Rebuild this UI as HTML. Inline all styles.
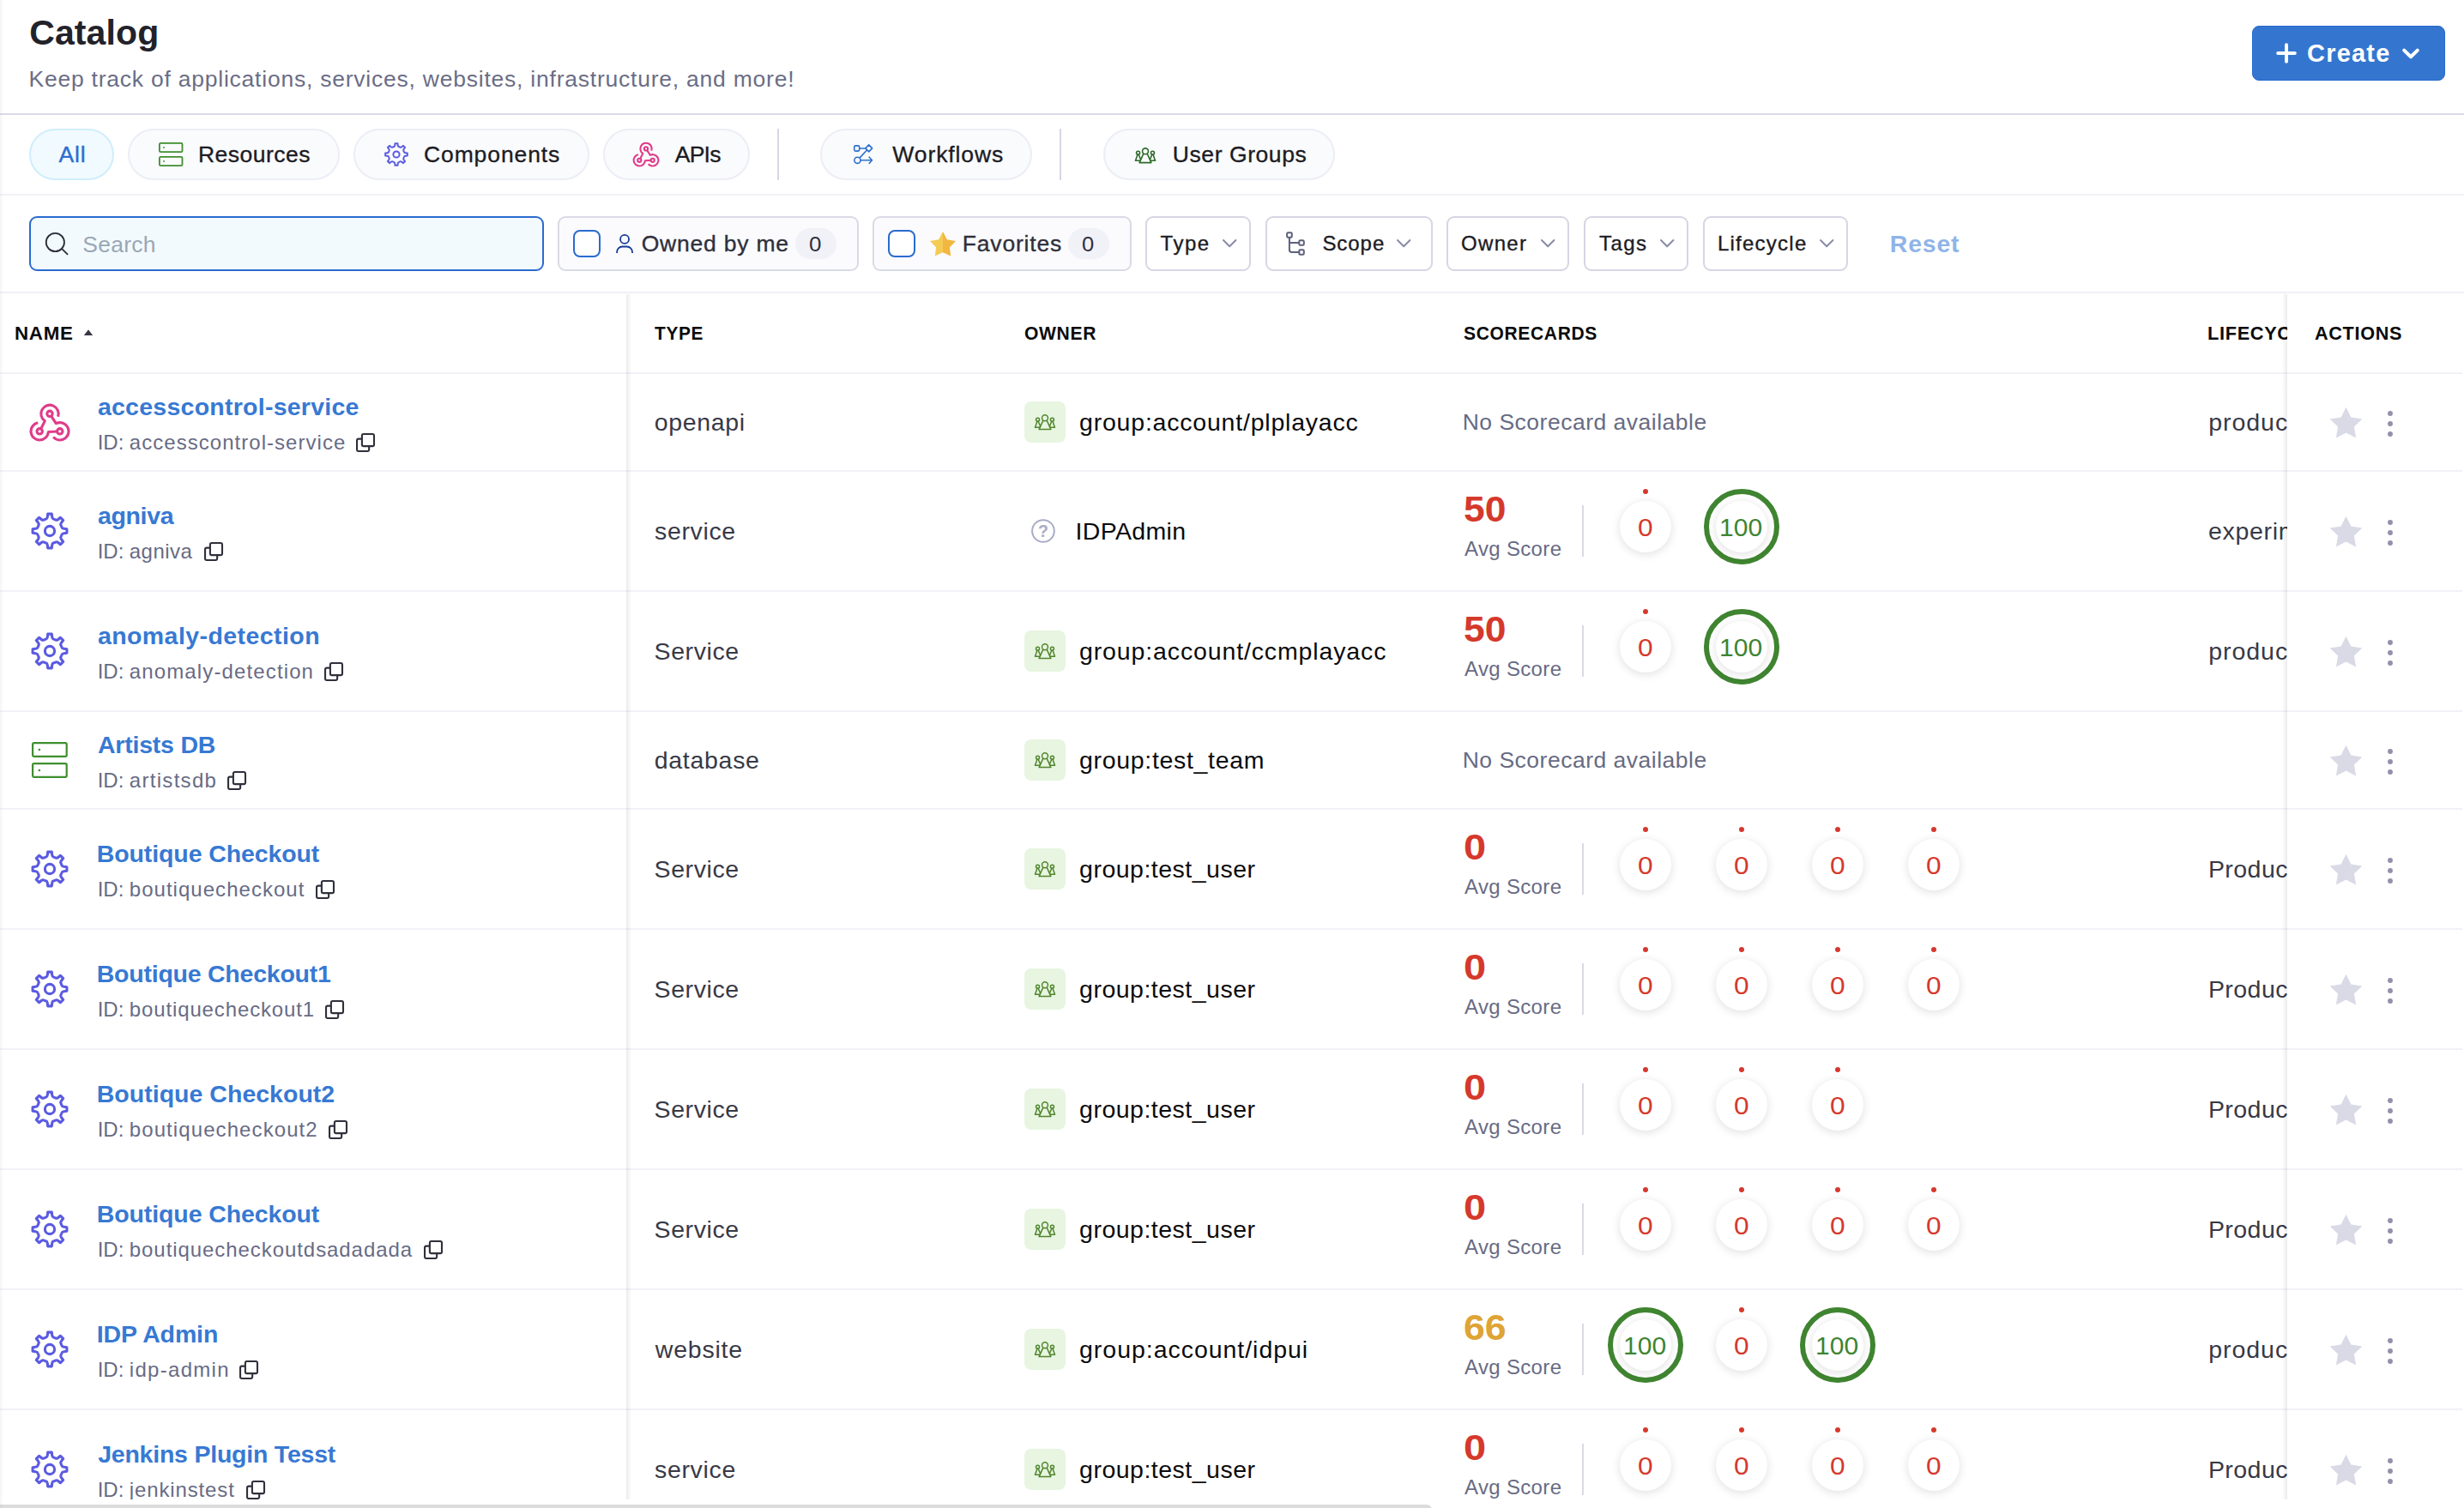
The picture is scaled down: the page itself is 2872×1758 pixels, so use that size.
<!DOCTYPE html>
<html lang="en"><head><meta charset="utf-8"><title>Catalog</title><style>
html,body{margin:0;padding:0;background:#fff;}
body{width:2872px;height:1758px;overflow:hidden;position:relative;font-family:"Liberation Sans",sans-serif;-webkit-font-smoothing:antialiased;}
.t{position:absolute;white-space:nowrap;}
.m{-webkit-text-stroke:0.35px currentColor;}
.sb{-webkit-text-stroke:0.85px currentColor;}
svg{overflow:visible}
</style></head><body>
<header>
<span class="t h1" style="left:34.16px;top:18px;font-size:41px;line-height:41px;color:#22222a;font-weight:700;letter-spacing:0.113px;">Catalog</span>
<span class="t" style="left:33.48px;top:79px;font-size:26.5px;line-height:26.5px;color:#6b6d85;letter-spacing:0.770px;">Keep track of applications, services, websites, infrastructure, and more!</span>
<div class="btn" style="position:absolute;left:2625px;top:30px;width:225px;height:64px;background:#3476cf;border:1px solid #2469cd;box-sizing:border-box;border-radius:8px;"></div>
<svg style="position:absolute;left:2651px;top:48px;" width="28" height="28" viewBox="0 0 28 28" fill="none"><path d="M14,4.2V23.8M4.2,14H23.8" stroke="#fff" stroke-width="4" stroke-linecap="round"/></svg>
<span class="t" style="left:2689.04px;top:48px;font-size:29px;line-height:29px;color:#fff;font-weight:700;letter-spacing:1.197px;">Create</span>
<svg style="position:absolute;left:2796px;top:52px;" width="28" height="20" viewBox="0 0 28 20" fill="none"><path d="M6.2,6.6L14,14.2L21.8,6.6" stroke="#fff" stroke-width="4" stroke-linecap="round" stroke-linejoin="round"/></svg>
<div style="position:absolute;left:0px;top:132px;width:2872px;height:2px;background:#d9dae6;"></div>
</header>
<nav>
<div class="pill on" style="position:absolute;left:34px;top:150px;width:99px;height:60px;border:2px solid #cfeefb;background:#f1fafe;border-radius:30px;box-sizing:border-box;"></div>
<span class="t" style="left:68.60px;top:167px;font-size:26.5px;line-height:26.5px;color:#2c6ed0;letter-spacing:0.797px;-webkit-text-stroke:0.4px #2c6ed0;">All</span>
<div class="pill" style="position:absolute;left:149px;top:150px;width:246.7px;height:60px;border:2px solid #ededf6;background:#fafbfd;border-radius:30px;box-sizing:border-box;"></div>
<svg style="position:absolute;left:183.8px;top:165px;" width="30.4" height="30" viewBox="0 0 30.4 30" fill="none"><rect x="1.9" y="1.9" width="26.599999999999998" height="10.24" rx="1.4" stroke="#3e8e2e" stroke-width="1.8"/><rect x="1.9" y="17.86" width="26.599999999999998" height="10.24" rx="1.4" stroke="#3e8e2e" stroke-width="1.8"/><circle cx="7.02" cy="7.02" r="0.9" fill="#3e8e2e"/><circle cx="7.02" cy="22.98" r="0.9" fill="#3e8e2e"/></svg>
<span class="t m" style="left:230.88px;top:167px;font-size:26.5px;line-height:26.5px;color:#1c1c24;letter-spacing:0.484px;">Resources</span>
<div class="pill" style="position:absolute;left:412.3px;top:150px;width:274.3px;height:60px;border:2px solid #ededf6;background:#fafbfd;border-radius:30px;box-sizing:border-box;"></div>
<svg style="position:absolute;left:445.2px;top:162.9px;" width="34" height="34" viewBox="0 0 34 34" fill="none"><path d="M14.02,8.07Q15.13,7.77 15.28,6.36L15.52,4.16L18.48,4.16L18.72,6.36Q18.87,7.77 19.98,8.07A9.42,9.42 0 0 1 21.21,8.58Q22.20,9.15 23.31,8.26L25.03,6.87L27.13,8.97L25.74,10.69Q24.85,11.80 25.42,12.79A9.42,9.42 0 0 1 25.93,14.02Q26.23,15.13 27.64,15.28L29.84,15.52L29.84,18.48L27.64,18.72Q26.23,18.87 25.93,19.98A9.42,9.42 0 0 1 25.42,21.21Q24.85,22.20 25.74,23.31L27.13,25.03L25.03,27.13L23.31,25.74Q22.20,24.85 21.21,25.42A9.42,9.42 0 0 1 19.98,25.93Q18.87,26.23 18.72,27.64L18.48,29.84L15.52,29.84L15.28,27.64Q15.13,26.23 14.02,25.93A9.42,9.42 0 0 1 12.79,25.42Q11.80,24.85 10.69,25.74L8.97,27.13L6.87,25.03L8.26,23.31Q9.15,22.20 8.58,21.21A9.42,9.42 0 0 1 8.07,19.98Q7.77,18.87 6.36,18.72L4.16,18.48L4.16,15.52L6.36,15.28Q7.77,15.13 8.07,14.02A9.42,9.42 0 0 1 8.58,12.79Q9.15,11.80 8.26,10.69L6.87,8.97L8.97,6.87L10.69,8.26Q11.80,9.15 12.79,8.58A9.42,9.42 0 0 1 14.02,8.07Z" stroke="#5b5be2" stroke-width="2.0" stroke-linejoin="round"/><circle cx="17.0" cy="17.0" r="3.61" stroke="#5b5be2" stroke-width="2.0"/></svg>
<span class="t m" style="left:493.98px;top:167px;font-size:26.5px;line-height:26.5px;color:#1c1c24;letter-spacing:0.899px;">Components</span>
<div class="pill" style="position:absolute;left:703.2px;top:150px;width:170.4px;height:60px;border:2px solid #ededf6;background:#fafbfd;border-radius:30px;box-sizing:border-box;"></div>
<svg style="position:absolute;left:733.7px;top:164.25px;" width="38" height="38" viewBox="0 0 38 38" fill="none"><path d="M25.32,11.60A6.68,6.68 0 1 0 15.26,14.96L12.22,20.94" stroke="#df3c8a" stroke-width="2.1" stroke-linejoin="round"/><circle cx="19.00" cy="9.42" r="2.10" stroke="#df3c8a" stroke-width="2.1"/><path d="M10.00,16.25A6.68,6.68 0 1 0 17.94,23.27L24.64,22.92" stroke="#df3c8a" stroke-width="2.1" stroke-linejoin="round"/><circle cx="11.27" cy="22.81" r="2.10" stroke="#df3c8a" stroke-width="2.1"/><path d="M21.69,27.19A6.68,6.68 0 1 0 23.80,16.80L20.14,11.18" stroke="#df3c8a" stroke-width="2.1" stroke-linejoin="round"/><circle cx="26.73" cy="22.81" r="2.10" stroke="#df3c8a" stroke-width="2.1"/></svg>
<span class="t m" style="left:786.80px;top:167px;font-size:26.5px;line-height:26.5px;color:#1c1c24;letter-spacing:-0.780px;">APIs</span>
<div style="position:absolute;left:906px;top:150px;width:2px;height:60px;background:#d6d7e4;"></div>
<div class="pill" style="position:absolute;left:956.4px;top:150px;width:246.6px;height:60px;border:2px solid #ededf6;background:#fafbfd;border-radius:30px;box-sizing:border-box;"></div>
<svg style="position:absolute;left:994px;top:167px;" width="26" height="28" viewBox="0 0 26 28" fill="none"><g stroke="#2e6fd0" stroke-width="1.6" stroke-linejoin="round" stroke-linecap="round"><rect x="1.70" y="2.90" width="6" height="6.2" rx="1.6"/><path d="M18.70,1.90L22.60,5.90L18.70,9.90L14.80,5.90Z"/><path d="M7.70,6.00L14.80,6.00"/><path d="M16.20,8.20L8.20,16.90"/><circle cx="5.40" cy="19.80" r="3.6"/><path d="M9.00,19.70L22.20,19.70M19.20,16.20L22.40,19.70L19.20,23.40"/></g></svg>
<span class="t m" style="left:1040.30px;top:167px;font-size:26.5px;line-height:26.5px;color:#1c1c24;letter-spacing:0.912px;">Workflows</span>
<div style="position:absolute;left:1235px;top:150px;width:2px;height:60px;background:#d6d7e4;"></div>
<div class="pill" style="position:absolute;left:1285.5px;top:150px;width:270.9px;height:60px;border:2px solid #ededf6;background:#fafbfd;border-radius:30px;box-sizing:border-box;"></div>
<svg style="position:absolute;left:1319.0px;top:167.7px;" width="32" height="26" viewBox="0 0 32 26" fill="none"><g stroke="#2d6a2a" stroke-width="1.6" stroke-linejoin="round" stroke-linecap="round"><circle cx="16.00" cy="8.30" r="3.45"/><path d="M13.70,11.40L9.10,21.60L22.90,21.60L18.30,11.40"/><circle cx="7.55" cy="10.30" r="2.00"/><path d="M6.95,12.30L4.50,19.20L10.00,19.20"/><path d="M8.15,12.30L10.50,17.60"/><circle cx="24.45" cy="10.30" r="2.00"/><path d="M25.05,12.30L27.50,19.20L22.00,19.20"/><path d="M23.85,12.30L21.50,17.60"/></g></svg>
<span class="t m" style="left:1366.81px;top:167px;font-size:26.5px;line-height:26.5px;color:#1c1c24;letter-spacing:0.570px;">User Groups</span>
<div style="position:absolute;left:0px;top:226px;width:2872px;height:2px;background:#f1f1f8;"></div>
</nav>
<section class="filters">
<div class="search" style="position:absolute;left:34px;top:252px;width:600px;height:64px;border:2px solid #2a6bcf;background:#f2fafe;border-radius:9px;box-sizing:border-box;"></div>
<svg style="position:absolute;left:50px;top:268px;" width="32" height="32" viewBox="0 0 32 32" fill="none"><circle cx="14.35" cy="14.5" r="10.6" stroke="#2b2c38" stroke-width="1.8"/><path d="M22.2,22.2L28.6,28.4" stroke="#2b2c38" stroke-width="1.8" stroke-linecap="round"/></svg>
<span class="t" style="left:96.31px;top:272px;font-size:26.5px;line-height:26.5px;color:#9aa7b4;letter-spacing:0.269px;">Search</span>
<div class="fbox" style="position:absolute;left:650px;top:252px;width:350.5px;height:64px;border:2px solid #d9dae6;background:#fbfbfe;border-radius:9px;box-sizing:border-box;"></div>
<div class="cb" style="position:absolute;left:668px;top:268px;width:32px;height:32px;border:2px solid #2a6bcf;background:#fff;border-radius:8px;box-sizing:border-box;"></div>
<svg style="position:absolute;left:714px;top:270px;" width="28" height="28" viewBox="0 0 28 28" fill="none"><circle cx="14.05" cy="8.9" r="5" stroke="#143c96" stroke-width="1.8"/><path d="M5.1,24.9v-1.2a6.2,6.2 0 0 1 6.2,-6.2h5.5a6.2,6.2 0 0 1 6.2,6.2v1.2" stroke="#143c96" stroke-width="1.8"/></svg>
<span class="t m" style="left:747.71px;top:271px;font-size:26.5px;line-height:26.5px;color:#2f303b;letter-spacing:0.778px;">Owned by me</span>
<div style="position:absolute;left:927.2px;top:266px;width:47.6px;height:36px;background:#f1f1f8;border-radius:18px;"></div>
<span class="t" style="left:943.29px;top:273px;font-size:24px;line-height:24px;color:#2f303b;transform:scaleX(1.0814);transform-origin:0 0;">0</span>
<div class="fbox" style="position:absolute;left:1017px;top:252px;width:301.5px;height:64px;border:2px solid #d9dae6;background:#fbfbfe;border-radius:9px;box-sizing:border-box;"></div>
<div class="cb" style="position:absolute;left:1035.3px;top:268px;width:32px;height:32px;border:2px solid #2a6bcf;background:#fff;border-radius:8px;box-sizing:border-box;"></div>
<svg style="position:absolute;left:1078.65px;top:265px;" width="40" height="40" viewBox="0 0 40 40" fill="none"><path d="M20.00,5.10L24.88,14.14L34.98,15.98L27.89,23.41L29.26,33.59L20.00,29.15Z" fill="#f1b740"/><path d="M20.00,5.10L20.00,29.15L10.74,33.59L12.11,23.41L5.02,15.98L15.12,14.14Z" fill="#f4cc54"/></svg>
<span class="t m" style="left:1121.78px;top:271px;font-size:26.5px;line-height:26.5px;color:#2f303b;letter-spacing:0.820px;">Favorites</span>
<div style="position:absolute;left:1245.1px;top:266px;width:47.7px;height:36px;background:#f1f1f8;border-radius:18px;"></div>
<span class="t" style="left:1261.11px;top:273px;font-size:24px;line-height:24px;color:#2f303b;transform:scaleX(1.0643);transform-origin:0 0;">0</span>
<div class="dd" style="position:absolute;left:1335.3px;top:252px;width:123.0px;height:64px;border:2px solid #d6d6e4;background:#fff;border-radius:9px;box-sizing:border-box;"></div>
<span class="t m" style="left:1352.62px;top:272px;font-size:24px;line-height:24px;color:#1c1c24;letter-spacing:1.512px;">Type</span>
<svg style="position:absolute;left:1422.8px;top:277.3px;" width="20.4" height="13.2" viewBox="0 0 20.4 13.2" fill="none"><path d="M3.0,3.0L10.2,10.2L17.4,3.0" stroke="#8a8ba6" stroke-width="2" stroke-linecap="round" stroke-linejoin="round"/></svg>
<div class="dd" style="position:absolute;left:1475.2px;top:252px;width:194.6px;height:64px;border:2px solid #d6d6e4;background:#fff;border-radius:9px;box-sizing:border-box;"></div>
<span class="t m" style="left:1541.42px;top:272px;font-size:24px;line-height:24px;color:#1c1c24;letter-spacing:0.951px;">Scope</span>
<svg style="position:absolute;left:1625.9px;top:277.3px;" width="20.4" height="13.2" viewBox="0 0 20.4 13.2" fill="none"><path d="M3.0,3.0L10.2,10.2L17.4,3.0" stroke="#8a8ba6" stroke-width="2" stroke-linecap="round" stroke-linejoin="round"/></svg>
<svg style="position:absolute;left:1497px;top:268px;" width="28" height="32" viewBox="0 0 28 32" fill="none"><g stroke="#5d607c" stroke-width="2" stroke-linejoin="round"><rect x="3.1" y="3.2" width="5.7" height="5.5" rx="1.2"/><rect x="17.3" y="12.2" width="5.5" height="5.5" rx="1.2"/><rect x="17.3" y="23.3" width="5.5" height="5.5" rx="1.2"/><path d="M5.9,8.8V23.3a2.8,2.8 0 0 0 2.8,2.8H17.3M5.9,15H17.3" /></g></svg>
<div class="dd" style="position:absolute;left:1686.4px;top:252px;width:142.8px;height:64px;border:2px solid #d6d6e4;background:#fff;border-radius:9px;box-sizing:border-box;"></div>
<span class="t m" style="left:1703.12px;top:272px;font-size:24px;line-height:24px;color:#1c1c24;letter-spacing:1.301px;">Owner</span>
<svg style="position:absolute;left:1794.1px;top:277.3px;" width="20.4" height="13.2" viewBox="0 0 20.4 13.2" fill="none"><path d="M3.0,3.0L10.2,10.2L17.4,3.0" stroke="#8a8ba6" stroke-width="2" stroke-linecap="round" stroke-linejoin="round"/></svg>
<div class="dd" style="position:absolute;left:1846.1px;top:252px;width:122.2px;height:64px;border:2px solid #d6d6e4;background:#fff;border-radius:9px;box-sizing:border-box;"></div>
<span class="t m" style="left:1863.92px;top:272px;font-size:24px;line-height:24px;color:#1c1c24;letter-spacing:1.472px;">Tags</span>
<svg style="position:absolute;left:1933.4px;top:277.3px;" width="20.4" height="13.2" viewBox="0 0 20.4 13.2" fill="none"><path d="M3.0,3.0L10.2,10.2L17.4,3.0" stroke="#8a8ba6" stroke-width="2" stroke-linecap="round" stroke-linejoin="round"/></svg>
<div class="dd" style="position:absolute;left:1985.3px;top:252px;width:169.0px;height:64px;border:2px solid #d6d6e4;background:#fff;border-radius:9px;box-sizing:border-box;"></div>
<span class="t m" style="left:2001.88px;top:272px;font-size:24px;line-height:24px;color:#1c1c24;letter-spacing:1.254px;">Lifecycle</span>
<svg style="position:absolute;left:2118.8px;top:277.3px;" width="20.4" height="13.2" viewBox="0 0 20.4 13.2" fill="none"><path d="M3.0,3.0L10.2,10.2L17.4,3.0" stroke="#8a8ba6" stroke-width="2" stroke-linecap="round" stroke-linejoin="round"/></svg>
<span class="t" style="left:2202.85px;top:270px;font-size:28.5px;line-height:28.5px;color:#8fb4e8;font-weight:700;letter-spacing:0.764px;">Reset</span>
<div style="position:absolute;left:0px;top:340px;width:2872px;height:2px;background:#f1f1f8;"></div>
</section>
<main class="table">
<span class="t" style="left:16.75px;top:378px;font-size:22.5px;line-height:22.5px;color:#0b0b0d;font-weight:700;letter-spacing:0.700px;transform:scaleX(0.9931);transform-origin:0 0;">NAME</span>
<svg style="position:absolute;left:96px;top:382px;" width="14" height="12" viewBox="0 0 14 12" fill="none"><path d="M1.8,9L7,2.3L12.2,9Z" fill="#383946"/></svg>
<span class="t" style="left:763.39px;top:378px;font-size:22.5px;line-height:22.5px;color:#0b0b0d;font-weight:700;letter-spacing:0.700px;transform:scaleX(0.9261);transform-origin:0 0;">TYPE</span>
<span class="t" style="left:1194.26px;top:378px;font-size:22.5px;line-height:22.5px;color:#0b0b0d;font-weight:700;letter-spacing:0.700px;transform:scaleX(0.9366);transform-origin:0 0;">OWNER</span>
<span class="t" style="left:1706.37px;top:378px;font-size:22.5px;line-height:22.5px;color:#0b0b0d;font-weight:700;letter-spacing:0.700px;transform:scaleX(0.9337);transform-origin:0 0;">SCORECARDS</span>
<div style="position:absolute;left:0px;top:434px;width:2870px;height:2px;background:#f1f1f8;"></div>
<div style="position:absolute;left:2560px;top:342px;width:106px;height:1416px;overflow:hidden">
<span class="t" style="left:13.29px;top:36px;font-size:22.5px;line-height:22.5px;color:#0b0b0d;font-weight:700;letter-spacing:0.700px;transform:scaleX(0.9663);transform-origin:0 0;">LIFECYCLE</span>
<span class="t" style="left:14.19px;top:136px;font-size:28.5px;line-height:28.5px;color:#383946;letter-spacing:0.972px;">production</span>
<span class="t" style="left:13.96px;top:263px;font-size:28.5px;line-height:28.5px;color:#383946;letter-spacing:0.706px;">experimental</span>
<span class="t" style="left:14.19px;top:403px;font-size:28.5px;line-height:28.5px;color:#383946;letter-spacing:0.972px;">production</span>
<span class="t" style="left:13.92px;top:657px;font-size:28.5px;line-height:28.5px;color:#383946;letter-spacing:0.451px;">Production</span>
<span class="t" style="left:13.92px;top:797px;font-size:28.5px;line-height:28.5px;color:#383946;letter-spacing:0.451px;">Production</span>
<span class="t" style="left:13.92px;top:937px;font-size:28.5px;line-height:28.5px;color:#383946;letter-spacing:0.451px;">Production</span>
<span class="t" style="left:13.92px;top:1077px;font-size:28.5px;line-height:28.5px;color:#383946;letter-spacing:0.451px;">Production</span>
<span class="t" style="left:14.19px;top:1217px;font-size:28.5px;line-height:28.5px;color:#383946;letter-spacing:0.972px;">production</span>
<span class="t" style="left:13.92px;top:1357px;font-size:28.5px;line-height:28.5px;color:#383946;letter-spacing:0.451px;">Production</span>
</div>
<div class="row" style="position:absolute;left:0;top:436px;width:2870px;height:114px;border-bottom:2px solid #f1f1f8;box-sizing:border-box"></div>
<svg style="position:absolute;left:29.9px;top:468.7px;" width="56" height="56" viewBox="0 0 56 56" fill="none"><path d="M37.64,16.70A10.20,10.20 0 1 0 22.30,21.83L17.65,30.96" stroke="#df3c8a" stroke-width="3.1" stroke-linejoin="round"/><circle cx="28.00" cy="13.37" r="3.20" stroke="#df3c8a" stroke-width="3.1"/><path d="M14.25,23.80A10.20,10.20 0 1 0 26.38,34.52L36.60,33.98" stroke="#df3c8a" stroke-width="3.1" stroke-linejoin="round"/><circle cx="16.20" cy="33.81" r="3.20" stroke="#df3c8a" stroke-width="3.1"/><path d="M32.10,40.50A10.20,10.20 0 1 0 35.33,24.65L29.74,16.06" stroke="#df3c8a" stroke-width="3.1" stroke-linejoin="round"/><circle cx="39.80" cy="33.81" r="3.20" stroke="#df3c8a" stroke-width="3.1"/></svg>
<span class="t lnk" style="left:113.89px;top:460px;font-size:28.5px;line-height:28.5px;color:#3779d3;font-weight:700;letter-spacing:0.258px;">accesscontrol-service</span>
<span class="t" style="left:113.74px;top:504px;font-size:24px;line-height:24px;color:#686b84;letter-spacing:-0.052px;">ID:</span>
<span class="t" style="left:150.80px;top:504px;font-size:24px;line-height:24px;color:#686b84;letter-spacing:1.037px;">accesscontrol-service</span>
<svg style="position:absolute;left:414.3px;top:503.9px;" width="25" height="25" viewBox="0 0 25 25" fill="none"><rect x="7.90" y="2.05" width="14.10" height="14.10" rx="1.9" stroke="#2f303b" stroke-width="2.1"/><path d="M7.90,7.65H3.95a1.9,1.9 0 0 0 -1.9,1.9V20.05a1.9,1.9 0 0 0 1.9,1.9H14.25a1.9,1.9 0 0 0 1.9,-1.9V16.15" stroke="#2f303b" stroke-width="2.1"/></svg>
<span class="t" style="left:762.66px;top:478px;font-size:28.5px;line-height:28.5px;color:#383946;letter-spacing:0.653px;">openapi</span>
<div style="position:absolute;left:1194px;top:468.0px;width:48px;height:48px;background:#e7f5e1;border-radius:8px;"></div>
<svg style="position:absolute;left:1201.95px;top:478.8px;" width="32" height="26" viewBox="0 0 32 26" fill="none"><g stroke="#52862e" stroke-width="1.5" stroke-linejoin="round" stroke-linecap="round"><circle cx="16.00" cy="8.30" r="3.45"/><path d="M13.70,11.40L9.10,21.60L22.90,21.60L18.30,11.40"/><circle cx="7.55" cy="10.30" r="2.00"/><path d="M6.95,12.30L4.50,19.20L10.00,19.20"/><path d="M8.15,12.30L10.50,17.60"/><circle cx="24.45" cy="10.30" r="2.00"/><path d="M25.05,12.30L27.50,19.20L22.00,19.20"/><path d="M23.85,12.30L21.50,17.60"/></g></svg>
<span class="t" style="left:1258.06px;top:478px;font-size:28.5px;line-height:28.5px;color:#0b0b0d;letter-spacing:0.790px;">group:account/plplayacc</span>
<span class="t" style="left:1704.68px;top:479px;font-size:26.5px;line-height:26.5px;color:#676b83;letter-spacing:0.501px;">No Scorecard available</span>
<div class="row" style="position:absolute;left:0;top:550px;width:2870px;height:140px;border-bottom:2px solid #f1f1f8;box-sizing:border-box"></div>
<svg style="position:absolute;left:31.9px;top:592.8px;" width="52" height="52" viewBox="0 0 52 52" fill="none"><path d="M21.38,12.15Q23.10,11.69 23.33,9.50L23.70,6.10L28.30,6.10L28.67,9.50Q28.90,11.69 30.62,12.15A14.60,14.60 0 0 1 32.52,12.94Q34.07,13.83 35.78,12.45L38.45,10.30L41.70,13.55L39.55,16.22Q38.17,17.93 39.06,19.48A14.60,14.60 0 0 1 39.85,21.38Q40.31,23.10 42.50,23.33L45.90,23.70L45.90,28.30L42.50,28.67Q40.31,28.90 39.85,30.62A14.60,14.60 0 0 1 39.06,32.52Q38.17,34.07 39.55,35.78L41.70,38.45L38.45,41.70L35.78,39.55Q34.07,38.17 32.52,39.06A14.60,14.60 0 0 1 30.62,39.85Q28.90,40.31 28.67,42.50L28.30,45.90L23.70,45.90L23.33,42.50Q23.10,40.31 21.38,39.85A14.60,14.60 0 0 1 19.48,39.06Q17.93,38.17 16.22,39.55L13.55,41.70L10.30,38.45L12.45,35.78Q13.83,34.07 12.94,32.52A14.60,14.60 0 0 1 12.15,30.62Q11.69,28.90 9.50,28.67L6.10,28.30L6.10,23.70L9.50,23.33Q11.69,23.10 12.15,21.38A14.60,14.60 0 0 1 12.94,19.48Q13.83,17.93 12.45,16.22L10.30,13.55L13.55,10.30L16.22,12.45Q17.93,13.83 19.48,12.94A14.60,14.60 0 0 1 21.38,12.15Z" stroke="#5b5be2" stroke-width="3.1" stroke-linejoin="round"/><circle cx="26.0" cy="26.0" r="5.60" stroke="#5b5be2" stroke-width="3.1"/></svg>
<span class="t lnk" style="left:113.89px;top:587px;font-size:28.5px;line-height:28.5px;color:#3779d3;font-weight:700;letter-spacing:-0.307px;">agniva</span>
<span class="t" style="left:113.74px;top:631px;font-size:24px;line-height:24px;color:#686b84;letter-spacing:-0.052px;">ID:</span>
<span class="t" style="left:150.80px;top:631px;font-size:24px;line-height:24px;color:#686b84;letter-spacing:0.455px;">agniva</span>
<svg style="position:absolute;left:236.9px;top:630.9px;" width="25" height="25" viewBox="0 0 25 25" fill="none"><rect x="7.90" y="2.05" width="14.10" height="14.10" rx="1.9" stroke="#2f303b" stroke-width="2.1"/><path d="M7.90,7.65H3.95a1.9,1.9 0 0 0 -1.9,1.9V20.05a1.9,1.9 0 0 0 1.9,1.9H14.25a1.9,1.9 0 0 0 1.9,-1.9V16.15" stroke="#2f303b" stroke-width="2.1"/></svg>
<span class="t" style="left:763.09px;top:605px;font-size:28.5px;line-height:28.5px;color:#383946;letter-spacing:0.634px;">service</span>
<svg style="position:absolute;left:1200px;top:603.0px;" width="32" height="32" viewBox="0 0 32 32" fill="none"><circle cx="15.95" cy="16" r="12.85" stroke="#a9abc6" stroke-width="2"/></svg>
<span class="t" style="left:1210.04px;top:610px;font-size:19.5px;line-height:19.5px;color:#a9abc6;font-weight:700;">?</span>
<span class="t" style="left:1253.53px;top:605px;font-size:28.5px;line-height:28.5px;color:#0b0b0d;letter-spacing:0.332px;">IDPAdmin</span>
<span class="t" style="left:1706.27px;top:573px;font-size:42px;line-height:42px;color:#d5392c;font-weight:700;transform:scaleX(1.0583);transform-origin:0 0;">50</span>
<span class="t" style="left:1707.00px;top:628px;font-size:24px;line-height:24px;color:#686b84;letter-spacing:0.336px;">Avg Score</span>
<div style="position:absolute;left:1844px;top:589px;width:2px;height:60px;background:#d9dae6;"></div>
<svg style="position:absolute;left:1872px;top:568px;" width="92" height="92" viewBox="0 0 92 92" fill="none"><circle cx="46" cy="5" r="3" fill="#d5392c"/></svg>
<div class="sc" style="position:absolute;left:1888px;top:584px;width:60px;height:60px;background:#fff;border-radius:50%;box-shadow:0 2px 11px rgba(0,0,0,.13);"></div>
<span class="t" style="left:1909.19px;top:601px;font-size:29px;line-height:29px;color:#d5392c;transform:scaleX(1.0940);transform-origin:0 0;">0</span>
<svg style="position:absolute;left:1984px;top:568px;" width="92" height="92" viewBox="0 0 92 92" fill="none"><circle cx="46" cy="46" r="41" stroke="#3f8430" stroke-width="6" fill="none"/></svg>
<div class="sc" style="position:absolute;left:2000px;top:584px;width:60px;height:60px;background:#fff;border-radius:50%;box-shadow:0 2px 11px rgba(0,0,0,.13);"></div>
<span class="t" style="left:2004.35px;top:601px;font-size:29px;line-height:29px;color:#3f8430;transform:scaleX(1.0362);transform-origin:0 0;">100</span>
<div class="row" style="position:absolute;left:0;top:690px;width:2870px;height:140px;border-bottom:2px solid #f1f1f8;box-sizing:border-box"></div>
<svg style="position:absolute;left:31.9px;top:732.8px;" width="52" height="52" viewBox="0 0 52 52" fill="none"><path d="M21.38,12.15Q23.10,11.69 23.33,9.50L23.70,6.10L28.30,6.10L28.67,9.50Q28.90,11.69 30.62,12.15A14.60,14.60 0 0 1 32.52,12.94Q34.07,13.83 35.78,12.45L38.45,10.30L41.70,13.55L39.55,16.22Q38.17,17.93 39.06,19.48A14.60,14.60 0 0 1 39.85,21.38Q40.31,23.10 42.50,23.33L45.90,23.70L45.90,28.30L42.50,28.67Q40.31,28.90 39.85,30.62A14.60,14.60 0 0 1 39.06,32.52Q38.17,34.07 39.55,35.78L41.70,38.45L38.45,41.70L35.78,39.55Q34.07,38.17 32.52,39.06A14.60,14.60 0 0 1 30.62,39.85Q28.90,40.31 28.67,42.50L28.30,45.90L23.70,45.90L23.33,42.50Q23.10,40.31 21.38,39.85A14.60,14.60 0 0 1 19.48,39.06Q17.93,38.17 16.22,39.55L13.55,41.70L10.30,38.45L12.45,35.78Q13.83,34.07 12.94,32.52A14.60,14.60 0 0 1 12.15,30.62Q11.69,28.90 9.50,28.67L6.10,28.30L6.10,23.70L9.50,23.33Q11.69,23.10 12.15,21.38A14.60,14.60 0 0 1 12.94,19.48Q13.83,17.93 12.45,16.22L10.30,13.55L13.55,10.30L16.22,12.45Q17.93,13.83 19.48,12.94A14.60,14.60 0 0 1 21.38,12.15Z" stroke="#5b5be2" stroke-width="3.1" stroke-linejoin="round"/><circle cx="26.0" cy="26.0" r="5.60" stroke="#5b5be2" stroke-width="3.1"/></svg>
<span class="t lnk" style="left:113.89px;top:727px;font-size:28.5px;line-height:28.5px;color:#3779d3;font-weight:700;letter-spacing:0.434px;">anomaly-detection</span>
<span class="t" style="left:113.74px;top:771px;font-size:24px;line-height:24px;color:#686b84;letter-spacing:-0.052px;">ID:</span>
<span class="t" style="left:150.80px;top:771px;font-size:24px;line-height:24px;color:#686b84;letter-spacing:1.128px;">anomaly-detection</span>
<svg style="position:absolute;left:376.5px;top:770.9px;" width="25" height="25" viewBox="0 0 25 25" fill="none"><rect x="7.90" y="2.05" width="14.10" height="14.10" rx="1.9" stroke="#2f303b" stroke-width="2.1"/><path d="M7.90,7.65H3.95a1.9,1.9 0 0 0 -1.9,1.9V20.05a1.9,1.9 0 0 0 1.9,1.9H14.25a1.9,1.9 0 0 0 1.9,-1.9V16.15" stroke="#2f303b" stroke-width="2.1"/></svg>
<span class="t" style="left:762.52px;top:745px;font-size:28.5px;line-height:28.5px;color:#383946;letter-spacing:0.602px;">Service</span>
<div style="position:absolute;left:1194px;top:735.0px;width:48px;height:48px;background:#e7f5e1;border-radius:8px;"></div>
<svg style="position:absolute;left:1201.95px;top:745.8px;" width="32" height="26" viewBox="0 0 32 26" fill="none"><g stroke="#52862e" stroke-width="1.5" stroke-linejoin="round" stroke-linecap="round"><circle cx="16.00" cy="8.30" r="3.45"/><path d="M13.70,11.40L9.10,21.60L22.90,21.60L18.30,11.40"/><circle cx="7.55" cy="10.30" r="2.00"/><path d="M6.95,12.30L4.50,19.20L10.00,19.20"/><path d="M8.15,12.30L10.50,17.60"/><circle cx="24.45" cy="10.30" r="2.00"/><path d="M25.05,12.30L27.50,19.20L22.00,19.20"/><path d="M23.85,12.30L21.50,17.60"/></g></svg>
<span class="t" style="left:1258.06px;top:745px;font-size:28.5px;line-height:28.5px;color:#0b0b0d;letter-spacing:0.867px;">group:account/ccmplayacc</span>
<span class="t" style="left:1706.27px;top:713px;font-size:42px;line-height:42px;color:#d5392c;font-weight:700;transform:scaleX(1.0583);transform-origin:0 0;">50</span>
<span class="t" style="left:1707.00px;top:768px;font-size:24px;line-height:24px;color:#686b84;letter-spacing:0.336px;">Avg Score</span>
<div style="position:absolute;left:1844px;top:729px;width:2px;height:60px;background:#d9dae6;"></div>
<svg style="position:absolute;left:1872px;top:708px;" width="92" height="92" viewBox="0 0 92 92" fill="none"><circle cx="46" cy="5" r="3" fill="#d5392c"/></svg>
<div class="sc" style="position:absolute;left:1888px;top:724px;width:60px;height:60px;background:#fff;border-radius:50%;box-shadow:0 2px 11px rgba(0,0,0,.13);"></div>
<span class="t" style="left:1909.19px;top:741px;font-size:29px;line-height:29px;color:#d5392c;transform:scaleX(1.0940);transform-origin:0 0;">0</span>
<svg style="position:absolute;left:1984px;top:708px;" width="92" height="92" viewBox="0 0 92 92" fill="none"><circle cx="46" cy="46" r="41" stroke="#3f8430" stroke-width="6" fill="none"/></svg>
<div class="sc" style="position:absolute;left:2000px;top:724px;width:60px;height:60px;background:#fff;border-radius:50%;box-shadow:0 2px 11px rgba(0,0,0,.13);"></div>
<span class="t" style="left:2004.35px;top:741px;font-size:29px;line-height:29px;color:#3f8430;transform:scaleX(1.0362);transform-origin:0 0;">100</span>
<div class="row" style="position:absolute;left:0;top:830px;width:2870px;height:114px;border-bottom:2px solid #f1f1f8;box-sizing:border-box"></div>
<svg style="position:absolute;left:36.15px;top:864.0px;" width="43.8" height="44" viewBox="0 0 43.8 44" fill="none"><rect x="2.1" y="2.1" width="39.599999999999994" height="15.86" rx="1.6" stroke="#3e8e2e" stroke-width="2.2"/><rect x="2.1" y="26.04" width="39.599999999999994" height="15.86" rx="1.6" stroke="#3e8e2e" stroke-width="2.2"/><circle cx="9.86" cy="10.03" r="1.3" fill="#3e8e2e"/><circle cx="9.86" cy="33.97" r="1.3" fill="#3e8e2e"/></svg>
<span class="t lnk" style="left:113.89px;top:854px;font-size:28.5px;line-height:28.5px;color:#3779d3;font-weight:700;letter-spacing:-0.205px;">Artists DB</span>
<span class="t" style="left:113.74px;top:898px;font-size:24px;line-height:24px;color:#686b84;letter-spacing:-0.052px;">ID:</span>
<span class="t" style="left:150.80px;top:898px;font-size:24px;line-height:24px;color:#686b84;letter-spacing:1.298px;">artistsdb</span>
<svg style="position:absolute;left:263.9px;top:897.9px;" width="25" height="25" viewBox="0 0 25 25" fill="none"><rect x="7.90" y="2.05" width="14.10" height="14.10" rx="1.9" stroke="#2f303b" stroke-width="2.1"/><path d="M7.90,7.65H3.95a1.9,1.9 0 0 0 -1.9,1.9V20.05a1.9,1.9 0 0 0 1.9,1.9H14.25a1.9,1.9 0 0 0 1.9,-1.9V16.15" stroke="#2f303b" stroke-width="2.1"/></svg>
<span class="t" style="left:762.66px;top:872px;font-size:28.5px;line-height:28.5px;color:#383946;letter-spacing:0.719px;">database</span>
<div style="position:absolute;left:1194px;top:862.0px;width:48px;height:48px;background:#e7f5e1;border-radius:8px;"></div>
<svg style="position:absolute;left:1201.95px;top:872.8px;" width="32" height="26" viewBox="0 0 32 26" fill="none"><g stroke="#52862e" stroke-width="1.5" stroke-linejoin="round" stroke-linecap="round"><circle cx="16.00" cy="8.30" r="3.45"/><path d="M13.70,11.40L9.10,21.60L22.90,21.60L18.30,11.40"/><circle cx="7.55" cy="10.30" r="2.00"/><path d="M6.95,12.30L4.50,19.20L10.00,19.20"/><path d="M8.15,12.30L10.50,17.60"/><circle cx="24.45" cy="10.30" r="2.00"/><path d="M25.05,12.30L27.50,19.20L22.00,19.20"/><path d="M23.85,12.30L21.50,17.60"/></g></svg>
<span class="t" style="left:1258.06px;top:872px;font-size:28.5px;line-height:28.5px;color:#0b0b0d;letter-spacing:0.676px;">group:test_team</span>
<span class="t" style="left:1704.68px;top:873px;font-size:26.5px;line-height:26.5px;color:#676b83;letter-spacing:0.501px;">No Scorecard available</span>
<div class="row" style="position:absolute;left:0;top:944px;width:2870px;height:140px;border-bottom:2px solid #f1f1f8;box-sizing:border-box"></div>
<svg style="position:absolute;left:31.9px;top:986.8px;" width="52" height="52" viewBox="0 0 52 52" fill="none"><path d="M21.38,12.15Q23.10,11.69 23.33,9.50L23.70,6.10L28.30,6.10L28.67,9.50Q28.90,11.69 30.62,12.15A14.60,14.60 0 0 1 32.52,12.94Q34.07,13.83 35.78,12.45L38.45,10.30L41.70,13.55L39.55,16.22Q38.17,17.93 39.06,19.48A14.60,14.60 0 0 1 39.85,21.38Q40.31,23.10 42.50,23.33L45.90,23.70L45.90,28.30L42.50,28.67Q40.31,28.90 39.85,30.62A14.60,14.60 0 0 1 39.06,32.52Q38.17,34.07 39.55,35.78L41.70,38.45L38.45,41.70L35.78,39.55Q34.07,38.17 32.52,39.06A14.60,14.60 0 0 1 30.62,39.85Q28.90,40.31 28.67,42.50L28.30,45.90L23.70,45.90L23.33,42.50Q23.10,40.31 21.38,39.85A14.60,14.60 0 0 1 19.48,39.06Q17.93,38.17 16.22,39.55L13.55,41.70L10.30,38.45L12.45,35.78Q13.83,34.07 12.94,32.52A14.60,14.60 0 0 1 12.15,30.62Q11.69,28.90 9.50,28.67L6.10,28.30L6.10,23.70L9.50,23.33Q11.69,23.10 12.15,21.38A14.60,14.60 0 0 1 12.94,19.48Q13.83,17.93 12.45,16.22L10.30,13.55L13.55,10.30L16.22,12.45Q17.93,13.83 19.48,12.94A14.60,14.60 0 0 1 21.38,12.15Z" stroke="#5b5be2" stroke-width="3.1" stroke-linejoin="round"/><circle cx="26.0" cy="26.0" r="5.60" stroke="#5b5be2" stroke-width="3.1"/></svg>
<span class="t lnk" style="left:112.75px;top:981px;font-size:28.5px;line-height:28.5px;color:#3779d3;font-weight:700;letter-spacing:-0.104px;">Boutique Checkout</span>
<span class="t" style="left:113.74px;top:1025px;font-size:24px;line-height:24px;color:#686b84;letter-spacing:-0.052px;">ID:</span>
<span class="t" style="left:150.80px;top:1025px;font-size:24px;line-height:24px;color:#686b84;letter-spacing:1.027px;">boutiquecheckout</span>
<svg style="position:absolute;left:367.3px;top:1024.9px;" width="25" height="25" viewBox="0 0 25 25" fill="none"><rect x="7.90" y="2.05" width="14.10" height="14.10" rx="1.9" stroke="#2f303b" stroke-width="2.1"/><path d="M7.90,7.65H3.95a1.9,1.9 0 0 0 -1.9,1.9V20.05a1.9,1.9 0 0 0 1.9,1.9H14.25a1.9,1.9 0 0 0 1.9,-1.9V16.15" stroke="#2f303b" stroke-width="2.1"/></svg>
<span class="t" style="left:762.52px;top:999px;font-size:28.5px;line-height:28.5px;color:#383946;letter-spacing:0.602px;">Service</span>
<div style="position:absolute;left:1194px;top:989.0px;width:48px;height:48px;background:#e7f5e1;border-radius:8px;"></div>
<svg style="position:absolute;left:1201.95px;top:999.8px;" width="32" height="26" viewBox="0 0 32 26" fill="none"><g stroke="#52862e" stroke-width="1.5" stroke-linejoin="round" stroke-linecap="round"><circle cx="16.00" cy="8.30" r="3.45"/><path d="M13.70,11.40L9.10,21.60L22.90,21.60L18.30,11.40"/><circle cx="7.55" cy="10.30" r="2.00"/><path d="M6.95,12.30L4.50,19.20L10.00,19.20"/><path d="M8.15,12.30L10.50,17.60"/><circle cx="24.45" cy="10.30" r="2.00"/><path d="M25.05,12.30L27.50,19.20L22.00,19.20"/><path d="M23.85,12.30L21.50,17.60"/></g></svg>
<span class="t" style="left:1258.06px;top:999px;font-size:28.5px;line-height:28.5px;color:#0b0b0d;letter-spacing:0.497px;">group:test_user</span>
<span class="t" style="left:1705.95px;top:967px;font-size:42px;line-height:42px;color:#d5392c;font-weight:700;transform:scaleX(1.1193);transform-origin:0 0;">0</span>
<span class="t" style="left:1707.00px;top:1022px;font-size:24px;line-height:24px;color:#686b84;letter-spacing:0.336px;">Avg Score</span>
<div style="position:absolute;left:1844px;top:983px;width:2px;height:60px;background:#d9dae6;"></div>
<svg style="position:absolute;left:1872px;top:962px;" width="92" height="92" viewBox="0 0 92 92" fill="none"><circle cx="46" cy="5" r="3" fill="#d5392c"/></svg>
<div class="sc" style="position:absolute;left:1888px;top:978px;width:60px;height:60px;background:#fff;border-radius:50%;box-shadow:0 2px 11px rgba(0,0,0,.13);"></div>
<span class="t" style="left:1909.19px;top:995px;font-size:29px;line-height:29px;color:#d5392c;transform:scaleX(1.0940);transform-origin:0 0;">0</span>
<svg style="position:absolute;left:1984px;top:962px;" width="92" height="92" viewBox="0 0 92 92" fill="none"><circle cx="46" cy="5" r="3" fill="#d5392c"/></svg>
<div class="sc" style="position:absolute;left:2000px;top:978px;width:60px;height:60px;background:#fff;border-radius:50%;box-shadow:0 2px 11px rgba(0,0,0,.13);"></div>
<span class="t" style="left:2021.19px;top:995px;font-size:29px;line-height:29px;color:#d5392c;transform:scaleX(1.0940);transform-origin:0 0;">0</span>
<svg style="position:absolute;left:2096px;top:962px;" width="92" height="92" viewBox="0 0 92 92" fill="none"><circle cx="46" cy="5" r="3" fill="#d5392c"/></svg>
<div class="sc" style="position:absolute;left:2112px;top:978px;width:60px;height:60px;background:#fff;border-radius:50%;box-shadow:0 2px 11px rgba(0,0,0,.13);"></div>
<span class="t" style="left:2133.19px;top:995px;font-size:29px;line-height:29px;color:#d5392c;transform:scaleX(1.0940);transform-origin:0 0;">0</span>
<svg style="position:absolute;left:2208px;top:962px;" width="92" height="92" viewBox="0 0 92 92" fill="none"><circle cx="46" cy="5" r="3" fill="#d5392c"/></svg>
<div class="sc" style="position:absolute;left:2224px;top:978px;width:60px;height:60px;background:#fff;border-radius:50%;box-shadow:0 2px 11px rgba(0,0,0,.13);"></div>
<span class="t" style="left:2245.19px;top:995px;font-size:29px;line-height:29px;color:#d5392c;transform:scaleX(1.0940);transform-origin:0 0;">0</span>
<div class="row" style="position:absolute;left:0;top:1084px;width:2870px;height:140px;border-bottom:2px solid #f1f1f8;box-sizing:border-box"></div>
<svg style="position:absolute;left:31.9px;top:1126.8px;" width="52" height="52" viewBox="0 0 52 52" fill="none"><path d="M21.38,12.15Q23.10,11.69 23.33,9.50L23.70,6.10L28.30,6.10L28.67,9.50Q28.90,11.69 30.62,12.15A14.60,14.60 0 0 1 32.52,12.94Q34.07,13.83 35.78,12.45L38.45,10.30L41.70,13.55L39.55,16.22Q38.17,17.93 39.06,19.48A14.60,14.60 0 0 1 39.85,21.38Q40.31,23.10 42.50,23.33L45.90,23.70L45.90,28.30L42.50,28.67Q40.31,28.90 39.85,30.62A14.60,14.60 0 0 1 39.06,32.52Q38.17,34.07 39.55,35.78L41.70,38.45L38.45,41.70L35.78,39.55Q34.07,38.17 32.52,39.06A14.60,14.60 0 0 1 30.62,39.85Q28.90,40.31 28.67,42.50L28.30,45.90L23.70,45.90L23.33,42.50Q23.10,40.31 21.38,39.85A14.60,14.60 0 0 1 19.48,39.06Q17.93,38.17 16.22,39.55L13.55,41.70L10.30,38.45L12.45,35.78Q13.83,34.07 12.94,32.52A14.60,14.60 0 0 1 12.15,30.62Q11.69,28.90 9.50,28.67L6.10,28.30L6.10,23.70L9.50,23.33Q11.69,23.10 12.15,21.38A14.60,14.60 0 0 1 12.94,19.48Q13.83,17.93 12.45,16.22L10.30,13.55L13.55,10.30L16.22,12.45Q17.93,13.83 19.48,12.94A14.60,14.60 0 0 1 21.38,12.15Z" stroke="#5b5be2" stroke-width="3.1" stroke-linejoin="round"/><circle cx="26.0" cy="26.0" r="5.60" stroke="#5b5be2" stroke-width="3.1"/></svg>
<span class="t lnk" style="left:112.75px;top:1121px;font-size:28.5px;line-height:28.5px;color:#3779d3;font-weight:700;letter-spacing:-0.236px;">Boutique Checkout1</span>
<span class="t" style="left:113.74px;top:1165px;font-size:24px;line-height:24px;color:#686b84;letter-spacing:-0.052px;">ID:</span>
<span class="t" style="left:150.80px;top:1165px;font-size:24px;line-height:24px;color:#686b84;letter-spacing:0.869px;">boutiquecheckout1</span>
<svg style="position:absolute;left:378.1px;top:1164.9px;" width="25" height="25" viewBox="0 0 25 25" fill="none"><rect x="7.90" y="2.05" width="14.10" height="14.10" rx="1.9" stroke="#2f303b" stroke-width="2.1"/><path d="M7.90,7.65H3.95a1.9,1.9 0 0 0 -1.9,1.9V20.05a1.9,1.9 0 0 0 1.9,1.9H14.25a1.9,1.9 0 0 0 1.9,-1.9V16.15" stroke="#2f303b" stroke-width="2.1"/></svg>
<span class="t" style="left:762.52px;top:1139px;font-size:28.5px;line-height:28.5px;color:#383946;letter-spacing:0.602px;">Service</span>
<div style="position:absolute;left:1194px;top:1129.0px;width:48px;height:48px;background:#e7f5e1;border-radius:8px;"></div>
<svg style="position:absolute;left:1201.95px;top:1139.8px;" width="32" height="26" viewBox="0 0 32 26" fill="none"><g stroke="#52862e" stroke-width="1.5" stroke-linejoin="round" stroke-linecap="round"><circle cx="16.00" cy="8.30" r="3.45"/><path d="M13.70,11.40L9.10,21.60L22.90,21.60L18.30,11.40"/><circle cx="7.55" cy="10.30" r="2.00"/><path d="M6.95,12.30L4.50,19.20L10.00,19.20"/><path d="M8.15,12.30L10.50,17.60"/><circle cx="24.45" cy="10.30" r="2.00"/><path d="M25.05,12.30L27.50,19.20L22.00,19.20"/><path d="M23.85,12.30L21.50,17.60"/></g></svg>
<span class="t" style="left:1258.06px;top:1139px;font-size:28.5px;line-height:28.5px;color:#0b0b0d;letter-spacing:0.497px;">group:test_user</span>
<span class="t" style="left:1705.95px;top:1107px;font-size:42px;line-height:42px;color:#d5392c;font-weight:700;transform:scaleX(1.1193);transform-origin:0 0;">0</span>
<span class="t" style="left:1707.00px;top:1162px;font-size:24px;line-height:24px;color:#686b84;letter-spacing:0.336px;">Avg Score</span>
<div style="position:absolute;left:1844px;top:1123px;width:2px;height:60px;background:#d9dae6;"></div>
<svg style="position:absolute;left:1872px;top:1102px;" width="92" height="92" viewBox="0 0 92 92" fill="none"><circle cx="46" cy="5" r="3" fill="#d5392c"/></svg>
<div class="sc" style="position:absolute;left:1888px;top:1118px;width:60px;height:60px;background:#fff;border-radius:50%;box-shadow:0 2px 11px rgba(0,0,0,.13);"></div>
<span class="t" style="left:1909.19px;top:1135px;font-size:29px;line-height:29px;color:#d5392c;transform:scaleX(1.0940);transform-origin:0 0;">0</span>
<svg style="position:absolute;left:1984px;top:1102px;" width="92" height="92" viewBox="0 0 92 92" fill="none"><circle cx="46" cy="5" r="3" fill="#d5392c"/></svg>
<div class="sc" style="position:absolute;left:2000px;top:1118px;width:60px;height:60px;background:#fff;border-radius:50%;box-shadow:0 2px 11px rgba(0,0,0,.13);"></div>
<span class="t" style="left:2021.19px;top:1135px;font-size:29px;line-height:29px;color:#d5392c;transform:scaleX(1.0940);transform-origin:0 0;">0</span>
<svg style="position:absolute;left:2096px;top:1102px;" width="92" height="92" viewBox="0 0 92 92" fill="none"><circle cx="46" cy="5" r="3" fill="#d5392c"/></svg>
<div class="sc" style="position:absolute;left:2112px;top:1118px;width:60px;height:60px;background:#fff;border-radius:50%;box-shadow:0 2px 11px rgba(0,0,0,.13);"></div>
<span class="t" style="left:2133.19px;top:1135px;font-size:29px;line-height:29px;color:#d5392c;transform:scaleX(1.0940);transform-origin:0 0;">0</span>
<svg style="position:absolute;left:2208px;top:1102px;" width="92" height="92" viewBox="0 0 92 92" fill="none"><circle cx="46" cy="5" r="3" fill="#d5392c"/></svg>
<div class="sc" style="position:absolute;left:2224px;top:1118px;width:60px;height:60px;background:#fff;border-radius:50%;box-shadow:0 2px 11px rgba(0,0,0,.13);"></div>
<span class="t" style="left:2245.19px;top:1135px;font-size:29px;line-height:29px;color:#d5392c;transform:scaleX(1.0940);transform-origin:0 0;">0</span>
<div class="row" style="position:absolute;left:0;top:1224px;width:2870px;height:140px;border-bottom:2px solid #f1f1f8;box-sizing:border-box"></div>
<svg style="position:absolute;left:31.9px;top:1266.8px;" width="52" height="52" viewBox="0 0 52 52" fill="none"><path d="M21.38,12.15Q23.10,11.69 23.33,9.50L23.70,6.10L28.30,6.10L28.67,9.50Q28.90,11.69 30.62,12.15A14.60,14.60 0 0 1 32.52,12.94Q34.07,13.83 35.78,12.45L38.45,10.30L41.70,13.55L39.55,16.22Q38.17,17.93 39.06,19.48A14.60,14.60 0 0 1 39.85,21.38Q40.31,23.10 42.50,23.33L45.90,23.70L45.90,28.30L42.50,28.67Q40.31,28.90 39.85,30.62A14.60,14.60 0 0 1 39.06,32.52Q38.17,34.07 39.55,35.78L41.70,38.45L38.45,41.70L35.78,39.55Q34.07,38.17 32.52,39.06A14.60,14.60 0 0 1 30.62,39.85Q28.90,40.31 28.67,42.50L28.30,45.90L23.70,45.90L23.33,42.50Q23.10,40.31 21.38,39.85A14.60,14.60 0 0 1 19.48,39.06Q17.93,38.17 16.22,39.55L13.55,41.70L10.30,38.45L12.45,35.78Q13.83,34.07 12.94,32.52A14.60,14.60 0 0 1 12.15,30.62Q11.69,28.90 9.50,28.67L6.10,28.30L6.10,23.70L9.50,23.33Q11.69,23.10 12.15,21.38A14.60,14.60 0 0 1 12.94,19.48Q13.83,17.93 12.45,16.22L10.30,13.55L13.55,10.30L16.22,12.45Q17.93,13.83 19.48,12.94A14.60,14.60 0 0 1 21.38,12.15Z" stroke="#5b5be2" stroke-width="3.1" stroke-linejoin="round"/><circle cx="26.0" cy="26.0" r="5.60" stroke="#5b5be2" stroke-width="3.1"/></svg>
<span class="t lnk" style="left:112.75px;top:1261px;font-size:28.5px;line-height:28.5px;color:#3779d3;font-weight:700;letter-spacing:0.022px;">Boutique Checkout2</span>
<span class="t" style="left:113.74px;top:1305px;font-size:24px;line-height:24px;color:#686b84;letter-spacing:-0.052px;">ID:</span>
<span class="t" style="left:150.80px;top:1305px;font-size:24px;line-height:24px;color:#686b84;letter-spacing:1.088px;">boutiquecheckout2</span>
<svg style="position:absolute;left:381.6px;top:1304.9px;" width="25" height="25" viewBox="0 0 25 25" fill="none"><rect x="7.90" y="2.05" width="14.10" height="14.10" rx="1.9" stroke="#2f303b" stroke-width="2.1"/><path d="M7.90,7.65H3.95a1.9,1.9 0 0 0 -1.9,1.9V20.05a1.9,1.9 0 0 0 1.9,1.9H14.25a1.9,1.9 0 0 0 1.9,-1.9V16.15" stroke="#2f303b" stroke-width="2.1"/></svg>
<span class="t" style="left:762.52px;top:1279px;font-size:28.5px;line-height:28.5px;color:#383946;letter-spacing:0.602px;">Service</span>
<div style="position:absolute;left:1194px;top:1269.0px;width:48px;height:48px;background:#e7f5e1;border-radius:8px;"></div>
<svg style="position:absolute;left:1201.95px;top:1279.8px;" width="32" height="26" viewBox="0 0 32 26" fill="none"><g stroke="#52862e" stroke-width="1.5" stroke-linejoin="round" stroke-linecap="round"><circle cx="16.00" cy="8.30" r="3.45"/><path d="M13.70,11.40L9.10,21.60L22.90,21.60L18.30,11.40"/><circle cx="7.55" cy="10.30" r="2.00"/><path d="M6.95,12.30L4.50,19.20L10.00,19.20"/><path d="M8.15,12.30L10.50,17.60"/><circle cx="24.45" cy="10.30" r="2.00"/><path d="M25.05,12.30L27.50,19.20L22.00,19.20"/><path d="M23.85,12.30L21.50,17.60"/></g></svg>
<span class="t" style="left:1258.06px;top:1279px;font-size:28.5px;line-height:28.5px;color:#0b0b0d;letter-spacing:0.497px;">group:test_user</span>
<span class="t" style="left:1705.95px;top:1247px;font-size:42px;line-height:42px;color:#d5392c;font-weight:700;transform:scaleX(1.1193);transform-origin:0 0;">0</span>
<span class="t" style="left:1707.00px;top:1302px;font-size:24px;line-height:24px;color:#686b84;letter-spacing:0.336px;">Avg Score</span>
<div style="position:absolute;left:1844px;top:1263px;width:2px;height:60px;background:#d9dae6;"></div>
<svg style="position:absolute;left:1872px;top:1242px;" width="92" height="92" viewBox="0 0 92 92" fill="none"><circle cx="46" cy="5" r="3" fill="#d5392c"/></svg>
<div class="sc" style="position:absolute;left:1888px;top:1258px;width:60px;height:60px;background:#fff;border-radius:50%;box-shadow:0 2px 11px rgba(0,0,0,.13);"></div>
<span class="t" style="left:1909.19px;top:1275px;font-size:29px;line-height:29px;color:#d5392c;transform:scaleX(1.0940);transform-origin:0 0;">0</span>
<svg style="position:absolute;left:1984px;top:1242px;" width="92" height="92" viewBox="0 0 92 92" fill="none"><circle cx="46" cy="5" r="3" fill="#d5392c"/></svg>
<div class="sc" style="position:absolute;left:2000px;top:1258px;width:60px;height:60px;background:#fff;border-radius:50%;box-shadow:0 2px 11px rgba(0,0,0,.13);"></div>
<span class="t" style="left:2021.19px;top:1275px;font-size:29px;line-height:29px;color:#d5392c;transform:scaleX(1.0940);transform-origin:0 0;">0</span>
<svg style="position:absolute;left:2096px;top:1242px;" width="92" height="92" viewBox="0 0 92 92" fill="none"><circle cx="46" cy="5" r="3" fill="#d5392c"/></svg>
<div class="sc" style="position:absolute;left:2112px;top:1258px;width:60px;height:60px;background:#fff;border-radius:50%;box-shadow:0 2px 11px rgba(0,0,0,.13);"></div>
<span class="t" style="left:2133.19px;top:1275px;font-size:29px;line-height:29px;color:#d5392c;transform:scaleX(1.0940);transform-origin:0 0;">0</span>
<div class="row" style="position:absolute;left:0;top:1364px;width:2870px;height:140px;border-bottom:2px solid #f1f1f8;box-sizing:border-box"></div>
<svg style="position:absolute;left:31.9px;top:1406.8px;" width="52" height="52" viewBox="0 0 52 52" fill="none"><path d="M21.38,12.15Q23.10,11.69 23.33,9.50L23.70,6.10L28.30,6.10L28.67,9.50Q28.90,11.69 30.62,12.15A14.60,14.60 0 0 1 32.52,12.94Q34.07,13.83 35.78,12.45L38.45,10.30L41.70,13.55L39.55,16.22Q38.17,17.93 39.06,19.48A14.60,14.60 0 0 1 39.85,21.38Q40.31,23.10 42.50,23.33L45.90,23.70L45.90,28.30L42.50,28.67Q40.31,28.90 39.85,30.62A14.60,14.60 0 0 1 39.06,32.52Q38.17,34.07 39.55,35.78L41.70,38.45L38.45,41.70L35.78,39.55Q34.07,38.17 32.52,39.06A14.60,14.60 0 0 1 30.62,39.85Q28.90,40.31 28.67,42.50L28.30,45.90L23.70,45.90L23.33,42.50Q23.10,40.31 21.38,39.85A14.60,14.60 0 0 1 19.48,39.06Q17.93,38.17 16.22,39.55L13.55,41.70L10.30,38.45L12.45,35.78Q13.83,34.07 12.94,32.52A14.60,14.60 0 0 1 12.15,30.62Q11.69,28.90 9.50,28.67L6.10,28.30L6.10,23.70L9.50,23.33Q11.69,23.10 12.15,21.38A14.60,14.60 0 0 1 12.94,19.48Q13.83,17.93 12.45,16.22L10.30,13.55L13.55,10.30L16.22,12.45Q17.93,13.83 19.48,12.94A14.60,14.60 0 0 1 21.38,12.15Z" stroke="#5b5be2" stroke-width="3.1" stroke-linejoin="round"/><circle cx="26.0" cy="26.0" r="5.60" stroke="#5b5be2" stroke-width="3.1"/></svg>
<span class="t lnk" style="left:112.75px;top:1401px;font-size:28.5px;line-height:28.5px;color:#3779d3;font-weight:700;letter-spacing:-0.104px;">Boutique Checkout</span>
<span class="t" style="left:113.74px;top:1445px;font-size:24px;line-height:24px;color:#686b84;letter-spacing:-0.052px;">ID:</span>
<span class="t" style="left:150.80px;top:1445px;font-size:24px;line-height:24px;color:#686b84;letter-spacing:0.932px;">boutiquecheckoutdsadadada</span>
<svg style="position:absolute;left:493.2px;top:1444.9px;" width="25" height="25" viewBox="0 0 25 25" fill="none"><rect x="7.90" y="2.05" width="14.10" height="14.10" rx="1.9" stroke="#2f303b" stroke-width="2.1"/><path d="M7.90,7.65H3.95a1.9,1.9 0 0 0 -1.9,1.9V20.05a1.9,1.9 0 0 0 1.9,1.9H14.25a1.9,1.9 0 0 0 1.9,-1.9V16.15" stroke="#2f303b" stroke-width="2.1"/></svg>
<span class="t" style="left:762.52px;top:1419px;font-size:28.5px;line-height:28.5px;color:#383946;letter-spacing:0.602px;">Service</span>
<div style="position:absolute;left:1194px;top:1409.0px;width:48px;height:48px;background:#e7f5e1;border-radius:8px;"></div>
<svg style="position:absolute;left:1201.95px;top:1419.8px;" width="32" height="26" viewBox="0 0 32 26" fill="none"><g stroke="#52862e" stroke-width="1.5" stroke-linejoin="round" stroke-linecap="round"><circle cx="16.00" cy="8.30" r="3.45"/><path d="M13.70,11.40L9.10,21.60L22.90,21.60L18.30,11.40"/><circle cx="7.55" cy="10.30" r="2.00"/><path d="M6.95,12.30L4.50,19.20L10.00,19.20"/><path d="M8.15,12.30L10.50,17.60"/><circle cx="24.45" cy="10.30" r="2.00"/><path d="M25.05,12.30L27.50,19.20L22.00,19.20"/><path d="M23.85,12.30L21.50,17.60"/></g></svg>
<span class="t" style="left:1258.06px;top:1419px;font-size:28.5px;line-height:28.5px;color:#0b0b0d;letter-spacing:0.497px;">group:test_user</span>
<span class="t" style="left:1705.95px;top:1387px;font-size:42px;line-height:42px;color:#d5392c;font-weight:700;transform:scaleX(1.1193);transform-origin:0 0;">0</span>
<span class="t" style="left:1707.00px;top:1442px;font-size:24px;line-height:24px;color:#686b84;letter-spacing:0.336px;">Avg Score</span>
<div style="position:absolute;left:1844px;top:1403px;width:2px;height:60px;background:#d9dae6;"></div>
<svg style="position:absolute;left:1872px;top:1382px;" width="92" height="92" viewBox="0 0 92 92" fill="none"><circle cx="46" cy="5" r="3" fill="#d5392c"/></svg>
<div class="sc" style="position:absolute;left:1888px;top:1398px;width:60px;height:60px;background:#fff;border-radius:50%;box-shadow:0 2px 11px rgba(0,0,0,.13);"></div>
<span class="t" style="left:1909.19px;top:1415px;font-size:29px;line-height:29px;color:#d5392c;transform:scaleX(1.0940);transform-origin:0 0;">0</span>
<svg style="position:absolute;left:1984px;top:1382px;" width="92" height="92" viewBox="0 0 92 92" fill="none"><circle cx="46" cy="5" r="3" fill="#d5392c"/></svg>
<div class="sc" style="position:absolute;left:2000px;top:1398px;width:60px;height:60px;background:#fff;border-radius:50%;box-shadow:0 2px 11px rgba(0,0,0,.13);"></div>
<span class="t" style="left:2021.19px;top:1415px;font-size:29px;line-height:29px;color:#d5392c;transform:scaleX(1.0940);transform-origin:0 0;">0</span>
<svg style="position:absolute;left:2096px;top:1382px;" width="92" height="92" viewBox="0 0 92 92" fill="none"><circle cx="46" cy="5" r="3" fill="#d5392c"/></svg>
<div class="sc" style="position:absolute;left:2112px;top:1398px;width:60px;height:60px;background:#fff;border-radius:50%;box-shadow:0 2px 11px rgba(0,0,0,.13);"></div>
<span class="t" style="left:2133.19px;top:1415px;font-size:29px;line-height:29px;color:#d5392c;transform:scaleX(1.0940);transform-origin:0 0;">0</span>
<svg style="position:absolute;left:2208px;top:1382px;" width="92" height="92" viewBox="0 0 92 92" fill="none"><circle cx="46" cy="5" r="3" fill="#d5392c"/></svg>
<div class="sc" style="position:absolute;left:2224px;top:1398px;width:60px;height:60px;background:#fff;border-radius:50%;box-shadow:0 2px 11px rgba(0,0,0,.13);"></div>
<span class="t" style="left:2245.19px;top:1415px;font-size:29px;line-height:29px;color:#d5392c;transform:scaleX(1.0940);transform-origin:0 0;">0</span>
<div class="row" style="position:absolute;left:0;top:1504px;width:2870px;height:140px;border-bottom:2px solid #f1f1f8;box-sizing:border-box"></div>
<svg style="position:absolute;left:31.9px;top:1546.8px;" width="52" height="52" viewBox="0 0 52 52" fill="none"><path d="M21.38,12.15Q23.10,11.69 23.33,9.50L23.70,6.10L28.30,6.10L28.67,9.50Q28.90,11.69 30.62,12.15A14.60,14.60 0 0 1 32.52,12.94Q34.07,13.83 35.78,12.45L38.45,10.30L41.70,13.55L39.55,16.22Q38.17,17.93 39.06,19.48A14.60,14.60 0 0 1 39.85,21.38Q40.31,23.10 42.50,23.33L45.90,23.70L45.90,28.30L42.50,28.67Q40.31,28.90 39.85,30.62A14.60,14.60 0 0 1 39.06,32.52Q38.17,34.07 39.55,35.78L41.70,38.45L38.45,41.70L35.78,39.55Q34.07,38.17 32.52,39.06A14.60,14.60 0 0 1 30.62,39.85Q28.90,40.31 28.67,42.50L28.30,45.90L23.70,45.90L23.33,42.50Q23.10,40.31 21.38,39.85A14.60,14.60 0 0 1 19.48,39.06Q17.93,38.17 16.22,39.55L13.55,41.70L10.30,38.45L12.45,35.78Q13.83,34.07 12.94,32.52A14.60,14.60 0 0 1 12.15,30.62Q11.69,28.90 9.50,28.67L6.10,28.30L6.10,23.70L9.50,23.33Q11.69,23.10 12.15,21.38A14.60,14.60 0 0 1 12.94,19.48Q13.83,17.93 12.45,16.22L10.30,13.55L13.55,10.30L16.22,12.45Q17.93,13.83 19.48,12.94A14.60,14.60 0 0 1 21.38,12.15Z" stroke="#5b5be2" stroke-width="3.1" stroke-linejoin="round"/><circle cx="26.0" cy="26.0" r="5.60" stroke="#5b5be2" stroke-width="3.1"/></svg>
<span class="t lnk" style="left:112.75px;top:1541px;font-size:28.5px;line-height:28.5px;color:#3779d3;font-weight:700;letter-spacing:-0.116px;">IDP Admin</span>
<span class="t" style="left:113.74px;top:1585px;font-size:24px;line-height:24px;color:#686b84;letter-spacing:-0.052px;">ID:</span>
<span class="t" style="left:150.80px;top:1585px;font-size:24px;line-height:24px;color:#686b84;letter-spacing:1.297px;">idp-admin</span>
<svg style="position:absolute;left:278.1px;top:1584.9px;" width="25" height="25" viewBox="0 0 25 25" fill="none"><rect x="7.90" y="2.05" width="14.10" height="14.10" rx="1.9" stroke="#2f303b" stroke-width="2.1"/><path d="M7.90,7.65H3.95a1.9,1.9 0 0 0 -1.9,1.9V20.05a1.9,1.9 0 0 0 1.9,1.9H14.25a1.9,1.9 0 0 0 1.9,-1.9V16.15" stroke="#2f303b" stroke-width="2.1"/></svg>
<span class="t" style="left:763.80px;top:1559px;font-size:28.5px;line-height:28.5px;color:#383946;letter-spacing:0.772px;">website</span>
<div style="position:absolute;left:1194px;top:1549.0px;width:48px;height:48px;background:#e7f5e1;border-radius:8px;"></div>
<svg style="position:absolute;left:1201.95px;top:1559.8px;" width="32" height="26" viewBox="0 0 32 26" fill="none"><g stroke="#52862e" stroke-width="1.5" stroke-linejoin="round" stroke-linecap="round"><circle cx="16.00" cy="8.30" r="3.45"/><path d="M13.70,11.40L9.10,21.60L22.90,21.60L18.30,11.40"/><circle cx="7.55" cy="10.30" r="2.00"/><path d="M6.95,12.30L4.50,19.20L10.00,19.20"/><path d="M8.15,12.30L10.50,17.60"/><circle cx="24.45" cy="10.30" r="2.00"/><path d="M25.05,12.30L27.50,19.20L22.00,19.20"/><path d="M23.85,12.30L21.50,17.60"/></g></svg>
<span class="t" style="left:1258.06px;top:1559px;font-size:28.5px;line-height:28.5px;color:#0b0b0d;letter-spacing:0.966px;">group:account/idpui</span>
<span class="t" style="left:1706.04px;top:1527px;font-size:42px;line-height:42px;color:#dea435;font-weight:700;transform:scaleX(1.0634);transform-origin:0 0;">66</span>
<span class="t" style="left:1707.00px;top:1582px;font-size:24px;line-height:24px;color:#686b84;letter-spacing:0.336px;">Avg Score</span>
<div style="position:absolute;left:1844px;top:1543px;width:2px;height:60px;background:#d9dae6;"></div>
<svg style="position:absolute;left:1872px;top:1522px;" width="92" height="92" viewBox="0 0 92 92" fill="none"><circle cx="46" cy="46" r="41" stroke="#3f8430" stroke-width="6" fill="none"/></svg>
<div class="sc" style="position:absolute;left:1888px;top:1538px;width:60px;height:60px;background:#fff;border-radius:50%;box-shadow:0 2px 11px rgba(0,0,0,.13);"></div>
<span class="t" style="left:1892.35px;top:1555px;font-size:29px;line-height:29px;color:#3f8430;transform:scaleX(1.0362);transform-origin:0 0;">100</span>
<svg style="position:absolute;left:1984px;top:1522px;" width="92" height="92" viewBox="0 0 92 92" fill="none"><circle cx="46" cy="5" r="3" fill="#d5392c"/></svg>
<div class="sc" style="position:absolute;left:2000px;top:1538px;width:60px;height:60px;background:#fff;border-radius:50%;box-shadow:0 2px 11px rgba(0,0,0,.13);"></div>
<span class="t" style="left:2021.19px;top:1555px;font-size:29px;line-height:29px;color:#d5392c;transform:scaleX(1.0940);transform-origin:0 0;">0</span>
<svg style="position:absolute;left:2096px;top:1522px;" width="92" height="92" viewBox="0 0 92 92" fill="none"><circle cx="46" cy="46" r="41" stroke="#3f8430" stroke-width="6" fill="none"/></svg>
<div class="sc" style="position:absolute;left:2112px;top:1538px;width:60px;height:60px;background:#fff;border-radius:50%;box-shadow:0 2px 11px rgba(0,0,0,.13);"></div>
<span class="t" style="left:2116.35px;top:1555px;font-size:29px;line-height:29px;color:#3f8430;transform:scaleX(1.0362);transform-origin:0 0;">100</span>
<div class="row" style="position:absolute;left:0;top:1644px;width:2870px;height:140px;border-bottom:2px solid #f1f1f8;box-sizing:border-box"></div>
<svg style="position:absolute;left:31.9px;top:1686.8px;" width="52" height="52" viewBox="0 0 52 52" fill="none"><path d="M21.38,12.15Q23.10,11.69 23.33,9.50L23.70,6.10L28.30,6.10L28.67,9.50Q28.90,11.69 30.62,12.15A14.60,14.60 0 0 1 32.52,12.94Q34.07,13.83 35.78,12.45L38.45,10.30L41.70,13.55L39.55,16.22Q38.17,17.93 39.06,19.48A14.60,14.60 0 0 1 39.85,21.38Q40.31,23.10 42.50,23.33L45.90,23.70L45.90,28.30L42.50,28.67Q40.31,28.90 39.85,30.62A14.60,14.60 0 0 1 39.06,32.52Q38.17,34.07 39.55,35.78L41.70,38.45L38.45,41.70L35.78,39.55Q34.07,38.17 32.52,39.06A14.60,14.60 0 0 1 30.62,39.85Q28.90,40.31 28.67,42.50L28.30,45.90L23.70,45.90L23.33,42.50Q23.10,40.31 21.38,39.85A14.60,14.60 0 0 1 19.48,39.06Q17.93,38.17 16.22,39.55L13.55,41.70L10.30,38.45L12.45,35.78Q13.83,34.07 12.94,32.52A14.60,14.60 0 0 1 12.15,30.62Q11.69,28.90 9.50,28.67L6.10,28.30L6.10,23.70L9.50,23.33Q11.69,23.10 12.15,21.38A14.60,14.60 0 0 1 12.94,19.48Q13.83,17.93 12.45,16.22L10.30,13.55L13.55,10.30L16.22,12.45Q17.93,13.83 19.48,12.94A14.60,14.60 0 0 1 21.38,12.15Z" stroke="#5b5be2" stroke-width="3.1" stroke-linejoin="round"/><circle cx="26.0" cy="26.0" r="5.60" stroke="#5b5be2" stroke-width="3.1"/></svg>
<span class="t lnk" style="left:114.17px;top:1681px;font-size:28.5px;line-height:28.5px;color:#3779d3;font-weight:700;letter-spacing:-0.223px;">Jenkins Plugin Tesst</span>
<span class="t" style="left:113.74px;top:1725px;font-size:24px;line-height:24px;color:#686b84;letter-spacing:-0.052px;">ID:</span>
<span class="t" style="left:150.80px;top:1725px;font-size:24px;line-height:24px;color:#686b84;letter-spacing:0.868px;">jenkinstest</span>
<svg style="position:absolute;left:285.8px;top:1724.9px;" width="25" height="25" viewBox="0 0 25 25" fill="none"><rect x="7.90" y="2.05" width="14.10" height="14.10" rx="1.9" stroke="#2f303b" stroke-width="2.1"/><path d="M7.90,7.65H3.95a1.9,1.9 0 0 0 -1.9,1.9V20.05a1.9,1.9 0 0 0 1.9,1.9H14.25a1.9,1.9 0 0 0 1.9,-1.9V16.15" stroke="#2f303b" stroke-width="2.1"/></svg>
<span class="t" style="left:763.09px;top:1699px;font-size:28.5px;line-height:28.5px;color:#383946;letter-spacing:0.651px;">service</span>
<div style="position:absolute;left:1194px;top:1689.0px;width:48px;height:48px;background:#e7f5e1;border-radius:8px;"></div>
<svg style="position:absolute;left:1201.95px;top:1699.8px;" width="32" height="26" viewBox="0 0 32 26" fill="none"><g stroke="#52862e" stroke-width="1.5" stroke-linejoin="round" stroke-linecap="round"><circle cx="16.00" cy="8.30" r="3.45"/><path d="M13.70,11.40L9.10,21.60L22.90,21.60L18.30,11.40"/><circle cx="7.55" cy="10.30" r="2.00"/><path d="M6.95,12.30L4.50,19.20L10.00,19.20"/><path d="M8.15,12.30L10.50,17.60"/><circle cx="24.45" cy="10.30" r="2.00"/><path d="M25.05,12.30L27.50,19.20L22.00,19.20"/><path d="M23.85,12.30L21.50,17.60"/></g></svg>
<span class="t" style="left:1258.06px;top:1699px;font-size:28.5px;line-height:28.5px;color:#0b0b0d;letter-spacing:0.497px;">group:test_user</span>
<span class="t" style="left:1705.95px;top:1667px;font-size:42px;line-height:42px;color:#d5392c;font-weight:700;transform:scaleX(1.1193);transform-origin:0 0;">0</span>
<span class="t" style="left:1707.00px;top:1722px;font-size:24px;line-height:24px;color:#686b84;letter-spacing:0.336px;">Avg Score</span>
<div style="position:absolute;left:1844px;top:1683px;width:2px;height:60px;background:#d9dae6;"></div>
<svg style="position:absolute;left:1872px;top:1662px;" width="92" height="92" viewBox="0 0 92 92" fill="none"><circle cx="46" cy="5" r="3" fill="#d5392c"/></svg>
<div class="sc" style="position:absolute;left:1888px;top:1678px;width:60px;height:60px;background:#fff;border-radius:50%;box-shadow:0 2px 11px rgba(0,0,0,.13);"></div>
<span class="t" style="left:1909.19px;top:1695px;font-size:29px;line-height:29px;color:#d5392c;transform:scaleX(1.0940);transform-origin:0 0;">0</span>
<svg style="position:absolute;left:1984px;top:1662px;" width="92" height="92" viewBox="0 0 92 92" fill="none"><circle cx="46" cy="5" r="3" fill="#d5392c"/></svg>
<div class="sc" style="position:absolute;left:2000px;top:1678px;width:60px;height:60px;background:#fff;border-radius:50%;box-shadow:0 2px 11px rgba(0,0,0,.13);"></div>
<span class="t" style="left:2021.19px;top:1695px;font-size:29px;line-height:29px;color:#d5392c;transform:scaleX(1.0940);transform-origin:0 0;">0</span>
<svg style="position:absolute;left:2096px;top:1662px;" width="92" height="92" viewBox="0 0 92 92" fill="none"><circle cx="46" cy="5" r="3" fill="#d5392c"/></svg>
<div class="sc" style="position:absolute;left:2112px;top:1678px;width:60px;height:60px;background:#fff;border-radius:50%;box-shadow:0 2px 11px rgba(0,0,0,.13);"></div>
<span class="t" style="left:2133.19px;top:1695px;font-size:29px;line-height:29px;color:#d5392c;transform:scaleX(1.0940);transform-origin:0 0;">0</span>
<svg style="position:absolute;left:2208px;top:1662px;" width="92" height="92" viewBox="0 0 92 92" fill="none"><circle cx="46" cy="5" r="3" fill="#d5392c"/></svg>
<div class="sc" style="position:absolute;left:2224px;top:1678px;width:60px;height:60px;background:#fff;border-radius:50%;box-shadow:0 2px 11px rgba(0,0,0,.13);"></div>
<span class="t" style="left:2245.19px;top:1695px;font-size:29px;line-height:29px;color:#d5392c;transform:scaleX(1.0940);transform-origin:0 0;">0</span>
<div style="position:absolute;left:730px;top:343px;width:6px;height:1415px;background:linear-gradient(to right,rgba(30,30,50,.085),rgba(30,30,50,0));"></div>
<div style="position:absolute;left:2660px;top:343px;width:6px;height:1415px;background:linear-gradient(to left,rgba(30,30,50,.085),rgba(30,30,50,0));"></div>
<span class="t" style="left:2698.46px;top:378px;font-size:22.5px;line-height:22.5px;color:#0b0b0d;font-weight:700;letter-spacing:0.700px;transform:scaleX(0.9610);transform-origin:0 0;">ACTIONS</span>
<svg style="position:absolute;left:2713.1px;top:472.5px;" width="43" height="43" viewBox="0 0 43 43" fill="none"><path d="M21.50,1.70L27.32,13.49L40.33,15.38L30.92,24.56L33.14,37.52L21.50,31.40L9.86,37.52L12.08,24.56L2.67,15.38L15.68,13.49Z" fill="#d9dae6"/></svg>
<svg style="position:absolute;left:2781px;top:477.0px;" width="10" height="34" viewBox="0 0 10 34" fill="none"><circle cx="5" cy="5.00" r="2.95" fill="#9291ab"/><circle cx="5" cy="17.00" r="2.95" fill="#9291ab"/><circle cx="5" cy="29.00" r="2.95" fill="#9291ab"/></svg>
<svg style="position:absolute;left:2713.1px;top:599.5px;" width="43" height="43" viewBox="0 0 43 43" fill="none"><path d="M21.50,1.70L27.32,13.49L40.33,15.38L30.92,24.56L33.14,37.52L21.50,31.40L9.86,37.52L12.08,24.56L2.67,15.38L15.68,13.49Z" fill="#d9dae6"/></svg>
<svg style="position:absolute;left:2781px;top:604.0px;" width="10" height="34" viewBox="0 0 10 34" fill="none"><circle cx="5" cy="5.00" r="2.95" fill="#9291ab"/><circle cx="5" cy="17.00" r="2.95" fill="#9291ab"/><circle cx="5" cy="29.00" r="2.95" fill="#9291ab"/></svg>
<svg style="position:absolute;left:2713.1px;top:739.5px;" width="43" height="43" viewBox="0 0 43 43" fill="none"><path d="M21.50,1.70L27.32,13.49L40.33,15.38L30.92,24.56L33.14,37.52L21.50,31.40L9.86,37.52L12.08,24.56L2.67,15.38L15.68,13.49Z" fill="#d9dae6"/></svg>
<svg style="position:absolute;left:2781px;top:744.0px;" width="10" height="34" viewBox="0 0 10 34" fill="none"><circle cx="5" cy="5.00" r="2.95" fill="#9291ab"/><circle cx="5" cy="17.00" r="2.95" fill="#9291ab"/><circle cx="5" cy="29.00" r="2.95" fill="#9291ab"/></svg>
<svg style="position:absolute;left:2713.1px;top:866.5px;" width="43" height="43" viewBox="0 0 43 43" fill="none"><path d="M21.50,1.70L27.32,13.49L40.33,15.38L30.92,24.56L33.14,37.52L21.50,31.40L9.86,37.52L12.08,24.56L2.67,15.38L15.68,13.49Z" fill="#d9dae6"/></svg>
<svg style="position:absolute;left:2781px;top:871.0px;" width="10" height="34" viewBox="0 0 10 34" fill="none"><circle cx="5" cy="5.00" r="2.95" fill="#9291ab"/><circle cx="5" cy="17.00" r="2.95" fill="#9291ab"/><circle cx="5" cy="29.00" r="2.95" fill="#9291ab"/></svg>
<svg style="position:absolute;left:2713.1px;top:993.5px;" width="43" height="43" viewBox="0 0 43 43" fill="none"><path d="M21.50,1.70L27.32,13.49L40.33,15.38L30.92,24.56L33.14,37.52L21.50,31.40L9.86,37.52L12.08,24.56L2.67,15.38L15.68,13.49Z" fill="#d9dae6"/></svg>
<svg style="position:absolute;left:2781px;top:998.0px;" width="10" height="34" viewBox="0 0 10 34" fill="none"><circle cx="5" cy="5.00" r="2.95" fill="#9291ab"/><circle cx="5" cy="17.00" r="2.95" fill="#9291ab"/><circle cx="5" cy="29.00" r="2.95" fill="#9291ab"/></svg>
<svg style="position:absolute;left:2713.1px;top:1133.5px;" width="43" height="43" viewBox="0 0 43 43" fill="none"><path d="M21.50,1.70L27.32,13.49L40.33,15.38L30.92,24.56L33.14,37.52L21.50,31.40L9.86,37.52L12.08,24.56L2.67,15.38L15.68,13.49Z" fill="#d9dae6"/></svg>
<svg style="position:absolute;left:2781px;top:1138.0px;" width="10" height="34" viewBox="0 0 10 34" fill="none"><circle cx="5" cy="5.00" r="2.95" fill="#9291ab"/><circle cx="5" cy="17.00" r="2.95" fill="#9291ab"/><circle cx="5" cy="29.00" r="2.95" fill="#9291ab"/></svg>
<svg style="position:absolute;left:2713.1px;top:1273.5px;" width="43" height="43" viewBox="0 0 43 43" fill="none"><path d="M21.50,1.70L27.32,13.49L40.33,15.38L30.92,24.56L33.14,37.52L21.50,31.40L9.86,37.52L12.08,24.56L2.67,15.38L15.68,13.49Z" fill="#d9dae6"/></svg>
<svg style="position:absolute;left:2781px;top:1278.0px;" width="10" height="34" viewBox="0 0 10 34" fill="none"><circle cx="5" cy="5.00" r="2.95" fill="#9291ab"/><circle cx="5" cy="17.00" r="2.95" fill="#9291ab"/><circle cx="5" cy="29.00" r="2.95" fill="#9291ab"/></svg>
<svg style="position:absolute;left:2713.1px;top:1413.5px;" width="43" height="43" viewBox="0 0 43 43" fill="none"><path d="M21.50,1.70L27.32,13.49L40.33,15.38L30.92,24.56L33.14,37.52L21.50,31.40L9.86,37.52L12.08,24.56L2.67,15.38L15.68,13.49Z" fill="#d9dae6"/></svg>
<svg style="position:absolute;left:2781px;top:1418.0px;" width="10" height="34" viewBox="0 0 10 34" fill="none"><circle cx="5" cy="5.00" r="2.95" fill="#9291ab"/><circle cx="5" cy="17.00" r="2.95" fill="#9291ab"/><circle cx="5" cy="29.00" r="2.95" fill="#9291ab"/></svg>
<svg style="position:absolute;left:2713.1px;top:1553.5px;" width="43" height="43" viewBox="0 0 43 43" fill="none"><path d="M21.50,1.70L27.32,13.49L40.33,15.38L30.92,24.56L33.14,37.52L21.50,31.40L9.86,37.52L12.08,24.56L2.67,15.38L15.68,13.49Z" fill="#d9dae6"/></svg>
<svg style="position:absolute;left:2781px;top:1558.0px;" width="10" height="34" viewBox="0 0 10 34" fill="none"><circle cx="5" cy="5.00" r="2.95" fill="#9291ab"/><circle cx="5" cy="17.00" r="2.95" fill="#9291ab"/><circle cx="5" cy="29.00" r="2.95" fill="#9291ab"/></svg>
<svg style="position:absolute;left:2713.1px;top:1693.5px;" width="43" height="43" viewBox="0 0 43 43" fill="none"><path d="M21.50,1.70L27.32,13.49L40.33,15.38L30.92,24.56L33.14,37.52L21.50,31.40L9.86,37.52L12.08,24.56L2.67,15.38L15.68,13.49Z" fill="#d9dae6"/></svg>
<svg style="position:absolute;left:2781px;top:1698.0px;" width="10" height="34" viewBox="0 0 10 34" fill="none"><circle cx="5" cy="5.00" r="2.95" fill="#9291ab"/><circle cx="5" cy="17.00" r="2.95" fill="#9291ab"/><circle cx="5" cy="29.00" r="2.95" fill="#9291ab"/></svg>
</main>
<div style="position:absolute;left:0px;top:1748px;width:2872px;height:10px;background:#fff;"></div>
<div style="position:absolute;left:-10px;top:1754px;width:1679px;height:12px;background:#dcdcdc;border-radius:6px;"></div>
<div style="position:absolute;left:0px;top:0px;width:4px;height:1758px;background:linear-gradient(to right,rgba(20,20,40,.045),rgba(20,20,40,0));"></div>
</body></html>
